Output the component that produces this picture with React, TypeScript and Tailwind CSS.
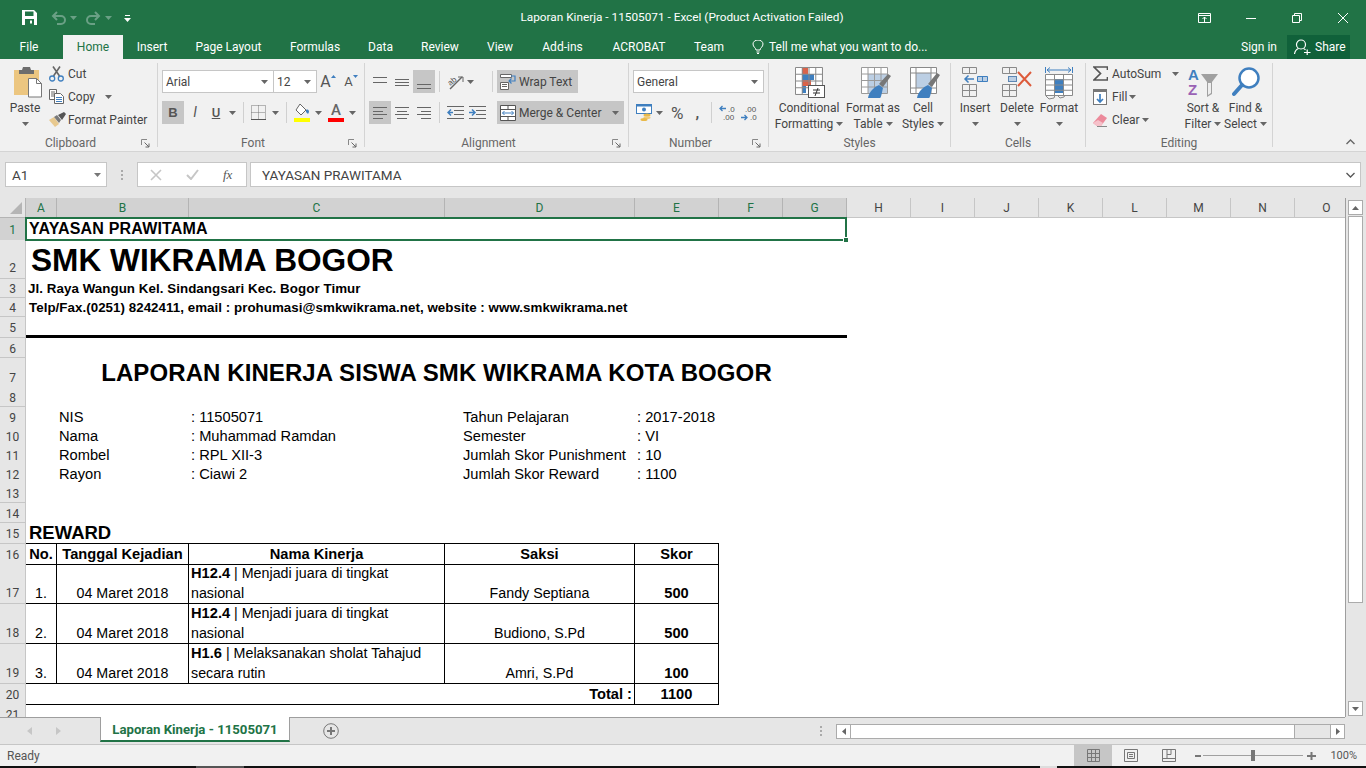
import React from "react";

const UI = { fontFamily: "Roboto, 'Noto Sans', sans-serif" };
const ARIAL = { fontFamily: "'Liberation Sans', Arial, sans-serif" };
const COLS = "grid-cols-[26px_31px_132px_256px_190px_84px_64px_64px_64px_64px_64px_64px_64px_64px_64px_64px]";
const BLUE = "#3f7fbf";

function Caret({ c = "#666", className = "" }: { c?: string; className?: string }) {
  return (
    <svg width="7" height="4" viewBox="0 0 7 4" className={className}>
      <path d="M0 0h7L3.5 4z" fill={c} />
    </svg>
  );
}

function Launcher() {
  return (
    <svg width="9" height="9" viewBox="0 0 9 9" className="shrink-0">
      <path d="M.5 6V.5H6" fill="none" stroke="#888" />
      <path d="M3.5 3.5L8 8M8 4.5V8H4.5" fill="none" stroke="#666" />
    </svg>
  );
}

function Group({ w, label, launcher, children }: { w: string; label: string; launcher?: boolean; children: React.ReactNode }) {
  return (
    <div className={`flex flex-col h-[84px] mt-[4px] border-r border-[#d4d4d4] shrink-0 ${w}`}>
      <div className="flex-1 flex min-h-0">{children}</div>
      <div className="h-[18px] mb-[-5px] flex items-center text-[12px] leading-[18px] text-[#666]">
        <span className="flex-1 text-center">{label}</span>
        {launcher && <span className="w-[16px] flex"><Launcher /></span>}
      </div>
    </div>
  );
}

function Lines({ rows, w = 16 }: { rows: [number, number, number][]; w?: number }) {
  return (
    <svg width={w} height="16" viewBox={`0 0 ${w} 16`}>
      {rows.map(([a, b, y], i) => (
        <path key={i} d={`M${a} ${y + 0.5}H${b}`} stroke="#666" strokeWidth="1" />
      ))}
    </svg>
  );
}

function Cell16({ sel, w = "w-[22px]", children }: { sel?: boolean; w?: string; children: React.ReactNode }) {
  return <div className={`h-[23px] flex items-center justify-center shrink-0 ${w} ${sel ? "bg-[#c6c6c6]" : ""}`}>{children}</div>;
}

function Sep({ className = "" }: { className?: string }) {
  return <div className={`w-px h-[21px] bg-[#d0d0d0] shrink-0 self-center ${className}`} />;
}

function PasteIcon() {
  return (
    <svg width="28" height="31" viewBox="0 0 28 31">
      <rect x="0" y="3" width="25" height="25" fill="#ecc680" />
      <path d="M5 3h3l1-3h7l1 3h3v4H5z" fill="#6d6d6d" />
      <path d="M14.5 11.5h8l5 5v13.5h-13z" fill="#fff" stroke="#777" />
      <path d="M22.5 11.5v5h5" fill="none" stroke="#777" />
    </svg>
  );
}

function ScissorsIcon() {
  return (
    <svg width="15" height="16" viewBox="0 0 15 16">
      <path d="M4.5 10L11 .5M10.5 10L4 .5" stroke="#666" strokeWidth="1.6" />
      <circle cx="3.2" cy="12.5" r="2.5" fill="none" stroke={BLUE} strokeWidth="1.3" />
      <circle cx="11.8" cy="12.5" r="2.5" fill="none" stroke={BLUE} strokeWidth="1.3" />
    </svg>
  );
}

function CopyIcon() {
  return (
    <svg width="15" height="15" viewBox="0 0 15 15">
      <path d="M.5.5h7v10h-7z" fill="#fff" stroke="#666" />
      <path d="M2 3h4M2 5h4M2 7h4" stroke="#666" />
      <path d="M5.5 4.5h6l3 3v7h-9z" fill="#fff" stroke="#666" />
      <path d="M7 8.5h6M7 10.5h6M7 12.5h6" stroke={BLUE} />
    </svg>
  );
}

function PainterIcon() {
  return (
    <svg width="17" height="15" viewBox="0 0 17 15">
      <path d="M0 8l5 -3 5 7 -4 3z" fill="#e8c98f" />
      <path d="M5 5l3-2 4 5-2 3z" fill="#7a7a7a" />
      <path d="M9 3l6-3 2 2-4 6z" fill="#555" />
    </svg>
  );
}

function BorderIcon() {
  return (
    <svg width="15" height="15" viewBox="0 0 15 15">
      <path d="M.5.5h14v14H.5zM7.5.5v14M.5 7.5h14" fill="none" stroke="#777" strokeDasharray="1 1" />
      <path d="M0 14.5h15" stroke="#555" />
    </svg>
  );
}

function FillIcon() {
  return (
    <svg width="16" height="19" viewBox="0 0 16 19">
      <path d="M6 1l6 6-5 5-5-5z" fill="#fff" stroke="#666" />
      <path d="M12 7c2-1 3 0 3 2l-1 2-2-2z" fill={BLUE} />
      <rect x="0" y="15" width="16" height="4" fill="#ffff00" />
    </svg>
  );
}

function FontColorIcon() {
  return (
    <div className="w-[16px] h-[19px] flex flex-col items-center">
      <span className="text-[15px] leading-[15px] font-medium text-[#666]">A</span>
      <div className="w-[16px] h-[4px] bg-[#ff0000]" />
    </div>
  );
}

function OrientIcon() {
  return (
    <svg width="19" height="16" viewBox="0 0 19 16" style={ARIAL}>
      <text x="1" y="10" fontSize="8" fill="#555" transform="rotate(-40 5 8)">ab</text>
      <path d="M3 15L15 3" stroke="#666" strokeWidth="1.4" />
      <path d="M11 3h5v5" fill="none" stroke="#666" />
    </svg>
  );
}

function IndentIcon({ rev }: { rev?: boolean }) {
  return (
    <svg width="17" height="13" viewBox="0 0 17 13">
      <path d="M0 .5h17M7 4.5h10M7 8.5h10M0 12.5h17" stroke="#666" />
      {rev ? <path d="M0 6.5h5M3 3.5l3 3-3 3" fill="none" stroke={BLUE} strokeWidth="1.5" /> : <path d="M6 6.5H1M4 3.5l-3 3 3 3" fill="none" stroke={BLUE} strokeWidth="1.5" />}
    </svg>
  );
}

function WrapIcon() {
  return (
    <svg width="17" height="16" viewBox="0 0 17 16">
      <path d="M.5.5h11v3H.5z" fill="#fff" stroke="#666" />
      <path d="M.5 8.5h8v7h-8zM2 10.5h5M2 12.5h5" fill="#fff" stroke="#666" />
      <path d="M11 2h4v5H9M11.5 4.5L9 7l2.5 2.5" fill="none" stroke={BLUE} strokeWidth="1.2" />
    </svg>
  );
}

function MergeIcon() {
  return (
    <svg width="16" height="16" viewBox="0 0 16 16">
      <path d="M.5.5h15v15H.5zM.5 4.5h15M.5 11.5h15M8 .5v4M8 11.5v4" fill="#fff" stroke="#555" />
      <path d="M2.5 8h11M4.5 6l-2 2 2 2M11.5 6l2 2-2 2" fill="none" stroke={BLUE} />
    </svg>
  );
}

function MoneyIcon() {
  return (
    <svg width="17" height="17" viewBox="0 0 17 17">
      <rect x="0.5" y="0.5" width="15" height="9" fill="#fff" stroke={BLUE} />
      <rect x="0.5" y="0.5" width="15" height="2" fill={BLUE} />
      <circle cx="8" cy="5.5" r="2" fill={BLUE} />
      <ellipse cx="11" cy="11" rx="3.5" ry="1.5" fill="#e9b949" />
      <ellipse cx="11" cy="13.5" rx="3.5" ry="1.5" fill="#efcb7a" />
      <ellipse cx="8" cy="15.5" rx="3.5" ry="1.5" fill="#e9b949" />
    </svg>
  );
}

function DecimalIcon({ inc }: { inc?: boolean }) {
  return (
    <svg width="18" height="16" viewBox="0 0 18 16" style={ARIAL}>
      {inc ? (
        <>
          <path d="M7 3.5H1M3.5 1L1 3.5 3.5 6" fill="none" stroke={BLUE} strokeWidth="1.3" />
          <text x="9" y="7" fontSize="8" fill="#555">.0</text>
          <text x="4" y="15" fontSize="8" fill="#555">.00</text>
        </>
      ) : (
        <>
          <text x="5" y="7" fontSize="8" fill="#555">.00</text>
          <path d="M1 12.5h6M4.5 10L7 12.5 4.5 15" fill="none" stroke={BLUE} strokeWidth="1.3" />
          <text x="10" y="15" fontSize="8" fill="#555">.0</text>
        </>
      )}
    </svg>
  );
}

function GridLines({ x, y, w, h, nx, ny, c = "#8a8a8a" }: { x: number; y: number; w: number; h: number; nx: number; ny: number; c?: string }) {
  let d = `M${x + 0.5} ${y + 0.5}h${w}v${h}h-${w}z`;
  for (let i = 1; i < nx; i++) d += `M${x + 0.5 + (i * w) / nx} ${y + 0.5}v${h}`;
  for (let i = 1; i < ny; i++) d += `M${x + 0.5} ${y + 0.5 + (i * h) / ny}h${w}`;
  return <path d={d} fill="none" stroke={c} />;
}

function CondIcon() {
  return (
    <svg width="30" height="31" viewBox="0 0 30 31">
      <rect x="0.5" y="0.5" width="26" height="26" fill="#fff" />
      <rect x="7" y="1" width="6" height="6" fill="#d9634a" />
      <rect x="7" y="7" width="12" height="6" fill={BLUE} />
      <rect x="7" y="13" width="9" height="6" fill="#d9634a" />
      <rect x="7" y="19" width="4" height="7" fill={BLUE} />
      <GridLines x={0} y={0} w={27} h={27} nx={4} ny={4} />
      <rect x="13.5" y="18.5" width="16" height="12" fill="#fff" stroke="#555" />
      <path d="M18 23h7M18 26h7M20 29l3-8" fill="none" stroke="#333" />
    </svg>
  );
}

function TableIcon() {
  return (
    <svg width="30" height="31" viewBox="0 0 30 31">
      <rect x="0.5" y="0.5" width="26" height="26" fill="#fff" />
      <rect x="7" y="7" width="19" height="19" fill="#bccfe4" />
      <GridLines x={0} y={0} w={26} h={26} nx={4} ny={4} c="#9a9a9a" />
      <path d="M18 17l9-10 3 2-8 11z" fill="#777" />
      <path d="M7 31c1-6 6-11 11-13l4 3c-1 4-2 10-3 10z" fill={BLUE} />
    </svg>
  );
}

function CellStylesIcon() {
  return (
    <svg width="30" height="31" viewBox="0 0 30 31">
      <rect x="0.5" y="0.5" width="26" height="26" fill="#fff" />
      <rect x="6" y="6" width="15" height="15" fill="#bccfe4" />
      <path d="M.5.5h26v26H.5zM.5 6h26M6 .5v26M21 .5v26M.5 21h26" fill="none" stroke="#8a8a8a" />
      <path d="M18 17l9-11 3 2-8 12z" fill="#777" />
      <path d="M7 31c1-6 6-11 11-13l4 3c-1 4-2 10-3 10z" fill={BLUE} />
    </svg>
  );
}

function InsertIcon() {
  return (
    <svg width="26" height="30" viewBox="0 0 26 30">
      <GridLines x={0} y={0} w={14} h={6} nx={2} ny={1} />
      <GridLines x={0} y={17} w={14} h={12} nx={2} ny={2} />
      <rect x="15.5" y="9.5" width="10" height="5" fill="#bccfe4" />
      <GridLines x={15} y={9} w={10} h={5} nx={2} ny={1} c={BLUE} />
      <path d="M12 12H3M6.5 8.5L3 12l3.5 3.5" fill="none" stroke={BLUE} strokeWidth="1.5" />
    </svg>
  );
}

function DeleteIcon() {
  return (
    <svg width="30" height="30" viewBox="0 0 30 30">
      <GridLines x={0} y={0} w={14} h={6} nx={2} ny={1} />
      <GridLines x={0} y={17} w={14} h={12} nx={2} ny={2} />
      <rect x="6.5" y="9.5" width="8" height="5" fill="#bccfe4" stroke="#5c86b3" />
      <path d="M16 5l13 14M29 5L16 19" stroke="#dd5b3b" strokeWidth="2" />
    </svg>
  );
}

function FormatIcon() {
  return (
    <svg width="28" height="33" viewBox="0 0 28 33">
      <path d="M.5 0v6M27.5 0v6M2 3h24M5 .5L2 3l3 2.5M23 .5L26 3l-3 2.5" fill="none" stroke={BLUE} />
      <rect x="0.5" y="7.5" width="27" height="21" fill="#fff" />
      <rect x="9" y="12" width="9" height="14" fill={BLUE} />
      <GridLines x={0} y={7} w={27} h={21} nx={3} ny={4} />
      <path d="M1 29l3 3 5-1 1-3M12 28l3 3 4-1 1-2" fill="none" stroke="#888" />
    </svg>
  );
}

function SigmaIcon() {
  return (
    <svg width="15" height="15" viewBox="0 0 15 15">
      <path d="M14.5 4V1H1l6.5 6.5L1 14h13.5v-3" fill="none" stroke="#555" strokeWidth="1.7" />
    </svg>
  );
}

function FillDownIcon() {
  return (
    <svg width="14" height="16" viewBox="0 0 14 16">
      <rect x="0.5" y="0.5" width="13" height="15" fill="#fff" stroke="#777" />
      <rect x="1" y="1" width="12" height="2" fill="#777" />
      <path d="M7 5v8M4 10l3 3 3-3" fill="none" stroke={BLUE} strokeWidth="1.7" />
    </svg>
  );
}

function EraserIcon() {
  return (
    <svg width="14" height="14" viewBox="0 0 14 14">
      <path d="M8 1l6 4-6 8H4L0 10z" fill="#ec8a9b" />
      <path d="M0 10l4 3h4l2-3-5-3z" fill="#f6c1ca" />
      <path d="M4 13.5h10" stroke="#888" />
    </svg>
  );
}

function SortIcon() {
  return (
    <div className="w-[30px] h-[31px] flex items-start">
      <div className="flex flex-col text-[15px] leading-[15px] font-bold w-[13px]" style={ARIAL}>
        <span className="text-[#3f7fbf]">A</span>
        <span className="text-[#9a62b5]">Z</span>
      </div>
      <svg width="17" height="24" viewBox="0 0 17 24" className="mt-[7px]">
        <path d="M0 0h17L11 8v12l-5 3V8z" fill="#a0a0a0" />
        <path d="M7 9v12l3-2V9z" fill="#eee" />
      </svg>
    </div>
  );
}

function FindIcon() {
  return (
    <svg width="28" height="30" viewBox="0 0 28 30">
      <circle cx="17" cy="11" r="9.5" fill="#fff" stroke={BLUE} strokeWidth="2.5" />
      <path d="M10 18L2 27" stroke={BLUE} strokeWidth="4" strokeLinecap="round" />
    </svg>
  );
}

function BigButton({ w, icon, l1, l2, caretOnly, ic = "" }: { w: string; icon: React.ReactNode; l1: string; l2?: string; caretOnly?: boolean; ic?: string }) {
  return (
    <div className={`flex flex-col items-center shrink-0 ${w}`}>
      <div className={`h-[37px] pt-[4px] flex justify-center ${ic}`}>{icon}</div>
      <div className="text-[12px] leading-[16px] text-[#444] whitespace-nowrap">{l1}</div>
      {caretOnly ? (
        <div className="h-[16px] flex items-center"><Caret /></div>
      ) : (
        <div className="text-[12px] leading-[16px] text-[#444] whitespace-nowrap flex items-center gap-[3px]">
          {l2}
          <Caret />
        </div>
      )}
    </div>
  );
}

function TitleBar() {
  return (
    <div className="h-[35px] bg-[#217346] grid grid-cols-[1fr_auto_1fr] items-center shrink-0 text-white">
      <div className="flex items-center pl-[22px]">
        <svg width="15" height="15" viewBox="0 0 15 15">
          <path fillRule="evenodd" fill="#fff" d="M0 0h12l3 3v12H0zM3 1.5v4.5h8.5V1.5zM3 9v6h9V9zM8 10.5h2v3H8z" />
        </svg>
        <svg width="15" height="14" viewBox="0 0 15 14" className="ml-[14px]">
          <path d="M6 1L2 5l4 4M2 5h8a4 4 0 0 1 0 8H6" fill="none" stroke="#6aa085" strokeWidth="2" />
        </svg>
        <Caret c="#6aa085" className="ml-[4px]" />
        <svg width="15" height="14" viewBox="0 0 15 14" className="ml-[9px]">
          <path d="M9 1l4 4-4 4M13 5H5a4 4 0 0 0 0 8h4" fill="none" stroke="#6aa085" strokeWidth="2" />
        </svg>
        <Caret c="#6aa085" className="ml-[4px]" />
        <svg width="7" height="8" viewBox="0 0 7 8" className="ml-[12px] mt-[2px]">
          <path d="M1 .5h5" stroke="#fff" />
          <path d="M0 3h7L3.5 7z" fill="#fff" />
        </svg>
      </div>
      <div className="text-[11.8px] text-white whitespace-nowrap pr-[2px]">Laporan Kinerja - 11505071 - Excel (Product Activation Failed)</div>
      <div className="flex items-center justify-end pr-[18px]">
        <svg width="13" height="10" viewBox="0 0 13 10">
          <path d="M.5.5h12v9H.5zM.5 2.5h12" fill="none" stroke="#fff" />
          <path d="M6.5 9V4M4.5 6l2-2 2 2" fill="none" stroke="#fff" />
        </svg>
        <svg width="10" height="10" viewBox="0 0 10 10" className="ml-[35px]">
          <path d="M0 5.5h10" stroke="#fff" />
        </svg>
        <svg width="10" height="10" viewBox="0 0 10 10" className="ml-[36px]">
          <path d="M.5 2.5h7v7h-7zM2.5 2.5v-2h7v7h-2" fill="none" stroke="#fff" />
        </svg>
        <svg width="10" height="10" viewBox="0 0 10 10" className="ml-[36px]">
          <path d="M0 0l10 10M10 0L0 10" stroke="#fff" />
        </svg>
      </div>
    </div>
  );
}

function TabsRow() {
  const tabs: [string, string][] = [
    ["Insert", "w-[58px]"],
    ["Page Layout", "w-[95px]"],
    ["Formulas", "w-[78px]"],
    ["Data", "w-[53px]"],
    ["Review", "w-[66px]"],
    ["View", "w-[54px]"],
    ["Add-ins", "w-[71px]"],
    ["ACROBAT", "w-[82px]"],
    ["Team", "w-[58px]"],
  ];
  return (
    <div className="h-[24px] bg-[#217346] flex items-stretch shrink-0 text-[12px] text-white">
      <div className="w-[58px] flex items-center justify-center">File</div>
      <div className="w-[60px] ml-[5px] bg-[#f1f1f1] text-[#217346] flex items-center justify-center">Home</div>
      {tabs.map(([t, w]) => (
        <div key={t} className={`${w} flex items-center justify-center shrink-0`}>{t}</div>
      ))}
      <div className="flex items-center ml-[14px]">
        <svg width="12" height="14" viewBox="0 0 12 14">
          <path d="M4 10c0-2-3-3-3-6a5 4 0 0 1 10 0c0 3-3 4-3 6zM4.5 12h3M5 13.5h2" fill="none" stroke="#fff" />
        </svg>
        <span className="ml-[5px]">Tell me what you want to do...</span>
      </div>
      <div className="flex-1 flex items-center justify-end">
        <span className="mr-[10px]">Sign in</span>
        <div className="w-[63px] h-[24px] bg-[#10613a] flex items-center pl-[7px] mr-[16px]">
          <svg width="17" height="16" viewBox="0 0 17 16">
            <circle cx="7" cy="5.5" r="4.5" fill="none" stroke="#fff" strokeWidth="1.2" />
            <path d="M.5 15c.5-3 2.5-5 4-5.5M9.5 9.5c1 .3 1.5.8 2 1.5M10 13.5h6.5M13.2 10.5v5.5" fill="none" stroke="#fff" strokeWidth="1.2" />
          </svg>
          <span className="ml-[4px]">Share</span>
        </div>
      </div>
    </div>
  );
}

function Ribbon() {
  return (
    <div className="h-[93px] bg-[#f1f1f1] border-b border-[#d4d4d4] flex shrink-0 text-[#444]" style={UI}>
      <Group w="w-[158px]" label="Clipboard" launcher>
        <div className="w-[34px] ml-[8px] flex flex-col items-center shrink-0">
          <div className="h-[37px] pt-[4px] pl-[5px]"><PasteIcon /></div>
          <div className="text-[12px] leading-[16px]">Paste</div>
          <div className="h-[16px] flex items-center"><Caret /></div>
        </div>
        <div className="ml-[7px] -mt-px flex flex-col text-[12px]">
          <div className="h-[23px] flex items-center"><span className="w-[19px]"><ScissorsIcon /></span>Cut</div>
          <div className="h-[23px] flex items-center"><span className="w-[19px]"><CopyIcon /></span>Copy<Caret className="ml-[10px]" /></div>
          <div className="h-[23px] flex items-center"><span className="w-[19px]"><PainterIcon /></span>Format Painter</div>
        </div>
      </Group>
      <Group w="w-[207px]" label="Font" launcher>
        <div className="pl-[4px] pt-[7px] flex flex-col gap-[8px]">
          <div className="flex items-center h-[23px]">
            <div className="w-[112px] h-[23px] bg-white border border-[#c6c6c6] flex items-center justify-between pl-[3px] pr-[5px] text-[12px]">Arial<Caret /></div>
            <div className="w-[43px] h-[23px] bg-white border border-l-0 border-[#c6c6c6] flex items-center justify-between pl-[3px] pr-[5px] text-[12px]">12<Caret /></div>
            <div className="w-[22px] flex items-start justify-center text-[16px] leading-[18px] text-[#555]">
              A<svg width="5" height="3" viewBox="0 0 5 3" className="mt-[2px]"><path d="M0 3h5L2.5 0z" fill={BLUE} /></svg>
            </div>
            <div className="w-[24px] flex items-start justify-center text-[13px] leading-[18px] text-[#555]">
              A<svg width="5" height="3" viewBox="0 0 5 3" className="mt-[2px]"><path d="M0 0h5L2.5 3z" fill={BLUE} /></svg>
            </div>
          </div>
          <div className="flex items-center h-[23px]">
            <Cell16 sel><span className="font-bold text-[13px] text-[#555]" style={ARIAL}>B</span></Cell16>
            <Cell16 w="w-[22px]"><span className="italic text-[14px] text-[#555]">I</span></Cell16>
            <Cell16 w="w-[20px]"><span className="underline font-medium text-[13px] text-[#555]">U</span></Cell16>
            <Caret className="ml-[3px]" />
            <Sep className="ml-[7px]" />
            <span className="ml-[7px] flex"><BorderIcon /></span>
            <Caret className="ml-[6px]" />
            <Sep className="ml-[7px]" />
            <span className="ml-[7px] flex"><FillIcon /></span>
            <Caret className="ml-[5px]" />
            <span className="ml-[6px] flex"><FontColorIcon /></span>
            <Caret className="ml-[5px]" />
          </div>
        </div>
      </Group>
      <Group w="w-[264px]" label="Alignment" launcher>
        <div className="pl-[4px] pt-[7px] flex flex-col gap-[8px]">
          <div className="flex items-center h-[23px]">
            <Cell16><Lines rows={[[1, 15, 3], [1, 15, 8]]} /></Cell16>
            <Cell16><Lines rows={[[1, 15, 5], [1, 15, 8], [1, 15, 11]]} /></Cell16>
            <Cell16 sel><Lines rows={[[1, 15, 10], [1, 15, 14]]} /></Cell16>
            <Sep className="ml-[4px]" />
            <span className="ml-[7px] flex"><OrientIcon /></span>
            <Caret className="ml-[1px]" />
            <Sep className="ml-[18px]" />
            <div className="ml-[4px] w-[81px] h-[23px] bg-[#c6c6c6] flex items-center pl-[3px] text-[12px]">
              <WrapIcon /><span className="ml-[2px]">Wrap Text</span>
            </div>
          </div>
          <div className="flex items-center h-[23px]">
            <Cell16 sel><Lines rows={[[1, 15, 2], [1, 11, 6], [1, 15, 9], [1, 11, 13]]} /></Cell16>
            <Cell16><Lines rows={[[1, 15, 2], [3, 13, 6], [1, 15, 9], [3, 13, 13]]} /></Cell16>
            <Cell16><Lines rows={[[1, 15, 2], [5, 15, 6], [1, 15, 9], [5, 15, 13]]} /></Cell16>
            <Sep className="ml-[4px]" />
            <span className="ml-[7px] flex"><IndentIcon /></span>
            <span className="ml-[5px] flex"><IndentIcon rev /></span>
            <div className="ml-[11px] w-[127px] h-[23px] bg-[#c6c6c6] flex items-center pl-[3px] text-[12px]">
              <MergeIcon /><span className="ml-[3px]">Merge &amp; Center</span><Caret className="ml-[11px]" />
            </div>
          </div>
        </div>
      </Group>
      <Group w="w-[140px]" label="Number" launcher>
        <div className="pl-[4px] pt-[7px] flex flex-col gap-[8px]">
          <div className="w-[131px] h-[23px] bg-white border border-[#c6c6c6] flex items-center justify-between pl-[3px] pr-[5px] text-[12px]">General<Caret /></div>
          <div className="flex items-center h-[23px]">
            <span className="ml-[3px] flex"><MoneyIcon /></span>
            <Caret className="ml-[3px]" />
            <span className="ml-[8px] text-[17px] leading-[20px] text-[#555]">%</span>
            <span className="ml-[12px] w-[6px] text-[15px] font-bold leading-[20px] text-[#555]">,</span>
            <Sep className="ml-[10px]" />
            <span className="ml-[7px] flex"><DecimalIcon inc /></span>
            <span className="ml-[3px] flex"><DecimalIcon /></span>
          </div>
        </div>
      </Group>
      <Group w="w-[182px]" label="Styles">
        <div className="pl-[6px] flex">
          <BigButton w="w-[68px]" ic="ml-[2px]" icon={<CondIcon />} l1="Conditional" l2="Formatting" />
          <BigButton w="w-[60px]" ic="ml-[5px]" icon={<TableIcon />} l1="Format as" l2="Table" />
          <BigButton w="w-[40px]" ic="ml-[4px]" icon={<CellStylesIcon />} l1="Cell" l2="Styles" />
        </div>
      </Group>
      <Group w="w-[135px]" label="Cells">
        <div className="pl-[3px] flex">
          <BigButton w="w-[42px]" icon={<InsertIcon />} l1="Insert" caretOnly />
          <BigButton w="w-[42px]" icon={<DeleteIcon />} l1="Delete" caretOnly />
          <BigButton w="w-[42px]" icon={<FormatIcon />} l1="Format" caretOnly />
        </div>
      </Group>
      <Group w="w-[187px]" label="Editing">
        <div className="pl-[7px] flex">
          <div className="w-[89px] -mt-px flex flex-col text-[12px] shrink-0">
            <div className="h-[23px] flex items-center"><span className="w-[19px]"><SigmaIcon /></span>AutoSum<Caret className="ml-[11px]" /></div>
            <div className="h-[23px] flex items-center"><span className="w-[19px]"><FillDownIcon /></span>Fill<Caret className="ml-[2px]" /></div>
            <div className="h-[23px] flex items-center"><span className="w-[19px]"><EraserIcon /></span>Clear<Caret className="ml-[2px]" /></div>
          </div>
          <BigButton w="w-[42px]" icon={<SortIcon />} l1="Sort &" l2="Filter" />
          <BigButton w="w-[43px]" icon={<FindIcon />} l1="Find &" l2="Select" />
        </div>
      </Group>
      <div className="flex-1 flex justify-end items-end pr-[11px] pb-[6px]">
        <svg width="9" height="6" viewBox="0 0 9 6"><path d="M.5 5l4-4 4 4" fill="none" stroke="#666" strokeWidth="1.4" /></svg>
      </div>
    </div>
  );
}

function FormulaBar() {
  return (
    <div className="h-[46px] bg-[#e6e6e6] pt-[10px] flex items-start shrink-0 text-[#444]" style={UI}>
      <div className="ml-[5px] w-[102px] h-[25px] bg-white border border-[#c6c6c6] flex items-center justify-between pl-[6px] pr-[5px] pt-px text-[13.5px]">
        A1<Caret c="#777" />
      </div>
      <div className="w-[30px] h-[25px] flex flex-col items-center justify-center gap-[2px]">
        <div className="w-[2px] h-[2px] bg-[#aaa]" />
        <div className="w-[2px] h-[2px] bg-[#aaa]" />
        <div className="w-[2px] h-[2px] bg-[#aaa]" />
      </div>
      <div className="w-[110px] h-[25px] bg-white border border-[#c6c6c6] flex items-center shrink-0">
        <svg width="12" height="12" viewBox="0 0 12 12" className="ml-[12px]"><path d="M1 1l10 10M11 1L1 11" stroke="#c6c6c6" strokeWidth="1.6" /></svg>
        <svg width="13" height="11" viewBox="0 0 13 11" className="ml-[24px]"><path d="M1 6l4 4 7-9" fill="none" stroke="#c6c6c6" strokeWidth="2" /></svg>
        <span className="ml-[24px] text-[13px] italic text-[#555]" style={{ fontFamily: "'Liberation Serif', serif" }}>fx</span>
      </div>
      <div className="ml-[3px] w-[1111px] h-[25px] bg-white border border-[#c6c6c6] flex items-center justify-between pl-[11px] pr-[5px] pt-px text-[13.5px]">
        YAYASAN PRAWITAMA
        <svg width="9" height="6" viewBox="0 0 9 6"><path d="M.5 1l4 4 4-4" fill="none" stroke="#555" strokeWidth="1.3" /></svg>
      </div>
    </div>
  );
}

function Row({ n, h, sel, tall, children }: { n: number; h: string; sel?: boolean; tall?: boolean; children?: React.ReactNode }) {
  return (
    <div className={`grid ${COLS} ${h}`}>
      <div
        className={`flex justify-center text-[12px] leading-[16px] border-r border-b border-[#c6c6c6] ${tall ? "items-end pb-[2px]" : "items-center pt-[2px]"} ${sel ? "bg-[#d2d2d2] text-[#217346]" : "bg-[#e6e6e6] text-[#444]"}`}
        style={UI}
      >
        {n}
      </div>
      {children}
    </div>
  );
}

function ColHeader() {
  const selCols = ["A", "B", "C", "D", "E", "F", "G"];
  const rest = ["H", "I", "J", "K", "L", "M", "N", "O"];
  return (
    <div className={`grid ${COLS} h-[20px]`} style={UI}>
      <div className="bg-[#e6e6e6] border-r border-b border-[#b4b4b4] flex items-end justify-end pr-[3px] pb-[3px]">
        <svg width="12" height="12" viewBox="0 0 12 12"><path d="M12 0v12H0z" fill="#b5b5b5" /></svg>
      </div>
      {selCols.map((c) => (
        <div key={c} className="bg-[#d2d2d2] text-[#217346] text-[12px] flex items-center justify-center border-r border-[#b4b4b4] border-b">{c}</div>
      ))}
      {rest.map((c) => (
        <div key={c} className="bg-[#e6e6e6] text-[#444] text-[12px] flex items-center justify-center border-r border-b border-[#c6c6c6]">{c}</div>
      ))}
    </div>
  );
}

const T11 = "text-[14.67px] leading-[19px] text-black whitespace-nowrap flex items-start pt-[1px]";

function InfoRow({ n, a, b, c, d }: { n: number; a: string; b: string; c: string; d: string }) {
  return (
    <Row n={n} h="h-[19px]">
      <div />
      <div className={`${T11} pl-[2px]`}>{a}</div>
      <div className={`${T11} pl-[2px]`}>{b}</div>
      <div className={`${T11} pl-[18px]`}>{c}</div>
      <div className={`${T11} pl-[2px]`}>{d}</div>
    </Row>
  );
}

const TH = "border-r border-b border-black text-[14.67px] font-bold text-black whitespace-nowrap flex items-start pt-[1px] justify-center leading-[19px]";
const TD = "border-r border-b border-black text-[14.25px] text-black whitespace-nowrap flex items-end justify-center leading-[19px]";

function DataRow({ n, no, code, l1, l2, saksi, skor }: { n: number; no: string; code: string; l1: string; l2: string; saksi: string; skor: string }) {
  return (
    <Row n={n} h="h-[40px]" tall>
      <div className={TD}>{no}</div>
      <div className={TD}>04 Maret 2018</div>
      <div className="border-r border-b border-black text-[14.25px] leading-[20px] text-black whitespace-nowrap pl-[2px] -mt-px">
        <b className="text-[14.67px]">{code}</b> | {l1}
        <br />
        {l2}
      </div>
      <div className={TD}>{saksi}</div>
      <div className="border-r border-b border-black text-[14.67px] font-bold text-black flex items-end justify-center leading-[19px]">{skor}</div>
    </Row>
  );
}

function Sheet() {
  return (
    <div className="h-[519px] flex shrink-0 bg-[#e6e6e6]" style={ARIAL}>
      <div className="w-[1346px] h-full bg-white border-r border-[#9e9e9e] overflow-hidden">
        <ColHeader />
        <Row n={1} h="h-[22px]" sel>
          <div className="col-span-7 -ml-px -mt-px border-2 border-[#217346] relative flex items-center pl-[2px] text-[16px] tracking-[0.18px] font-bold text-black leading-[20px] whitespace-nowrap">
            YAYASAN PRAWITAMA
            <div className="absolute right-[-4px] bottom-[-4px] w-[6px] h-[6px] bg-[#217346] border border-white" />
          </div>
        </Row>
        <Row n={2} h="h-[39px]" tall>
          <div className="col-span-7 flex items-end pl-[5px] text-[31.65px] leading-[37px] font-bold text-black whitespace-nowrap">SMK WIKRAMA BOGOR</div>
        </Row>
        <Row n={3} h="h-[19px]">
          <div className="col-span-7 flex items-start pl-[2px] text-[13.33px] leading-[19px] tracking-[0.06px] font-bold text-black whitespace-nowrap">Jl. Raya Wangun Kel. Sindangsari Kec. Bogor Timur</div>
        </Row>
        <Row n={4} h="h-[19px]">
          <div className="col-span-7 flex items-start pl-[3px] text-[13.33px] leading-[19px] tracking-[0.045px] font-bold text-black whitespace-nowrap">Telp/Fax.(0251) 8242411, email : prohumasi@smkwikrama.net, website : www.smkwikrama.net</div>
        </Row>
        <Row n={5} h="h-[21px]">
          <div className="col-span-7 border-b-[3px] border-black" />
        </Row>
        <Row n={6} h="h-[20px]" />
        <Row n={7} h="h-[30px]" tall>
          <div className="col-span-7 flex items-end justify-center pb-[2px] text-[24px] tracking-[0.09px] leading-[29px] font-bold text-black whitespace-nowrap">LAPORAN KINERJA SISWA SMK WIKRAMA KOTA BOGOR</div>
        </Row>
        <Row n={8} h="h-[19px]" />
        <InfoRow n={9} a="NIS" b=": 11505071" c="Tahun Pelajaran" d=": 2017-2018" />
        <InfoRow n={10} a="Nama" b=": Muhammad Ramdan" c="Semester" d=": VI" />
        <InfoRow n={11} a="Rombel" b=": RPL XII-3" c="Jumlah Skor Punishment" d=": 10" />
        <InfoRow n={12} a="Rayon" b=": Ciawi 2" c="Jumlah Skor Reward" d=": 1100" />
        <Row n={13} h="h-[20px]" />
        <Row n={14} h="h-[20px]" />
        <Row n={15} h="h-[21px]">
          <div className="col-span-5 border-b border-black flex items-end pl-[3px] text-[18.5px] leading-[20px] font-bold text-black whitespace-nowrap">REWARD</div>
        </Row>
        <Row n={16} h="h-[20px]">
          <div className={TH}>No.</div>
          <div className={TH}>Tanggal Kejadian</div>
          <div className={TH}>Nama Kinerja</div>
          <div className={TH}>Saksi</div>
          <div className={TH}>Skor</div>
        </Row>
        <DataRow n={17} no="1." code="H12.4" l1="Menjadi juara di tingkat" l2="nasional" saksi="Fandy Septiana" skor="500" />
        <DataRow n={18} no="2." code="H12.4" l1="Menjadi juara di tingkat" l2="nasional" saksi="Budiono, S.Pd" skor="500" />
        <DataRow n={19} no="3." code="H1.6" l1="Melaksanakan sholat Tahajud" l2="secara rutin" saksi="Amri, S.Pd" skor="100" />
        <Row n={20} h="h-[20px]">
          <div className={`col-span-4 ${TH} !justify-end pr-[2px]`}>Total :</div>
          <div className={TH}>1100</div>
        </Row>
        <Row n={21} h="h-[20px]" />
      </div>
      <div className="w-[20px] pl-[2px] pr-[3px] pt-[2px] flex flex-col">
        <div className="h-[15px] bg-white border border-[#ababab] flex items-center justify-center">
          <svg width="7" height="4" viewBox="0 0 7 4"><path d="M0 4h7L3.5 0z" fill="#666" /></svg>
        </div>
        <div className="h-[387px] mt-px bg-white border border-[#ababab]" />
        <div className="flex-1" />
        <div className="h-[15px] mb-[1px] bg-white border border-[#ababab] flex items-center justify-center"><Caret /></div>
      </div>
    </div>
  );
}

function TabBar() {
  return (
    <div className="h-[28px] flex bg-[#e6e6e6] shrink-0 border-b border-[#c6c6c6]" style={UI}>
      <div className="w-[100px] border-t border-[#9e9e9e] flex items-center shrink-0">
        <svg width="5" height="8" viewBox="0 0 5 8" className="ml-[27px]"><path d="M5 0v8L0 4z" fill="#c6c6c6" /></svg>
        <svg width="5" height="8" viewBox="0 0 5 8" className="ml-[24px]"><path d="M0 0v8l5-4z" fill="#c6c6c6" /></svg>
      </div>
      <div className="w-[190px] h-[25px] pt-[3px] bg-white border-x border-[#9e9e9e] border-b-2 border-b-[#217346] flex items-center justify-center text-[13.2px] font-bold text-[#217346] shrink-0 whitespace-nowrap">
        Laporan Kinerja - 11505071
      </div>
      <div className="flex-1 border-t border-[#9e9e9e] flex items-center">
        <svg width="16" height="16" viewBox="0 0 16 16" className="ml-[33px]">
          <circle cx="8" cy="8" r="7.3" fill="none" stroke="#777" />
          <path d="M8 4v8M4 8h8" stroke="#777" strokeWidth="2" />
        </svg>
        <div className="ml-[481px] w-[2px] flex flex-col gap-[2px]">
          <div className="h-[2px] bg-[#aaa]" />
          <div className="h-[2px] bg-[#aaa]" />
          <div className="h-[2px] bg-[#aaa]" />
        </div>
        <div className="ml-[14px] w-[509px] h-[15px] flex border-y border-[#ababab]">
          <div className="w-[15px] bg-white border-x border-[#ababab] flex items-center justify-center">
            <svg width="4" height="7" viewBox="0 0 4 7"><path d="M4 0v7L0 3.5z" fill="#666" /></svg>
          </div>
          <div className="w-[444px] bg-white border-r border-[#ababab]" />
          <div className="flex-1" />
          <div className="w-[15px] bg-white border-x border-[#ababab] flex items-center justify-center">
            <svg width="4" height="7" viewBox="0 0 4 7"><path d="M0 0v7l4-3.5z" fill="#666" /></svg>
          </div>
        </div>
      </div>
      <div className="w-[21px]" />
    </div>
  );
}

function StatusBar() {
  return (
    <div className="h-[21px] bg-[#f1f1f1] flex items-stretch shrink-0 text-[12px] text-[#555]" style={UI}>
      <div className="pl-[7px] pt-px flex items-center w-[1074px]">Ready</div>
      <div className="w-[38px] bg-[#c6c6c6] flex items-center justify-center">
        <svg width="13" height="13" viewBox="0 0 13 13"><path d="M.5.5h12v12H.5zM4.5.5v12M8.5.5v12M.5 4.5h12M.5 8.5h12" fill="none" stroke="#777" /></svg>
      </div>
      <div className="w-[38px] flex items-center justify-center">
        <svg width="14" height="13" viewBox="0 0 14 13"><path d="M.5.5h13v12H.5z" fill="none" stroke="#777" /><path d="M3.5 3.5h7v6h-7zM5 5.5h4M5 7.5h4" fill="none" stroke="#777" /></svg>
      </div>
      <div className="w-[38px] flex items-center justify-center">
        <svg width="14" height="13" viewBox="0 0 14 13"><path d="M.5.5h13v12H.5zM.5 9.5h13M5 .5v9M9 .5v5H5" fill="none" stroke="#777" /></svg>
      </div>
      <div className="w-[7px]" />
      <div className="flex items-center">
        <div className="w-[6px] h-[2px] bg-[#777]" />
        <div className="ml-[2px] w-[100px] h-[1px] bg-[#a0a0a0] flex items-center">
          <div className="ml-[48px] w-[4px] h-[11px] bg-[#777] shrink-0" />
        </div>
        <svg width="9" height="9" viewBox="0 0 9 9" className="ml-[4px]"><path d="M4.5 1v8M0 5h9" stroke="#777" strokeWidth="2" /></svg>
      </div>
      <div className="flex-1 flex items-center justify-end pr-[9px] text-[11px] pt-px">100%</div>
    </div>
  );
}

export default function App() {
  return (
    <div className="w-[1366px] h-[768px] flex flex-col overflow-hidden bg-white" style={UI}>
      <TitleBar />
      <TabsRow />
      <Ribbon />
      <FormulaBar />
      <Sheet />
      <TabBar />
      <StatusBar />
      <div className="h-[2px] flex shrink-0">
        <div className="w-[196px] bg-[#111]" />
        <div className="w-[48px] bg-[#555]" />
        <div className="w-[796px] bg-[#111]" />
        <div className="w-[17px] bg-[#ddd]" />
        <div className="flex-1 bg-[#111]" />
      </div>
    </div>
  );
}
